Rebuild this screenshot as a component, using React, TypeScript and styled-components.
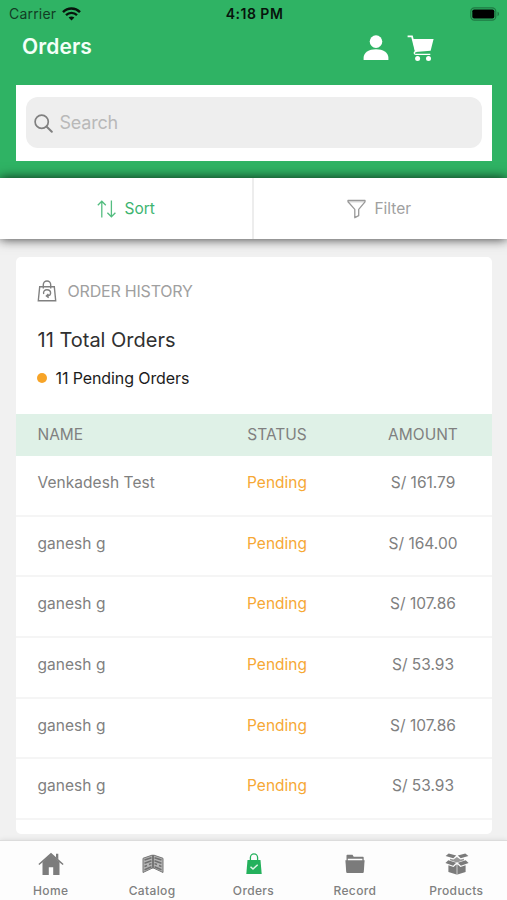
import React from 'react';
import styled, { createGlobalStyle } from 'styled-components';

const GREEN = '#2fb364';
const GREY = '#808080';

const GlobalStyle = createGlobalStyle`
  *, *::before, *::after { box-sizing: border-box; }
  body {
    margin: 0;
    font-family: Inter, 'Liberation Sans', sans-serif;
    background: #f1f1f1;
  }
`;

const Screen = styled.div`
  display: flex;
  flex-direction: column;
  width: 507px;
  height: 900px;
  overflow: hidden;
  background: #f1f1f1;
`;

const Text = styled.span<{ $size: number; $color?: string; $weight?: number; $spacing?: number }>`
  font-size: ${p => p.$size}px;
  color: ${p => p.$color ?? GREY};
  font-weight: ${p => p.$weight ?? 400};
  letter-spacing: ${p => p.$spacing ?? 0}px;
  line-height: 20px;
  white-space: nowrap;
`;

const Header = styled.header`
  height: 178px;
  flex: none;
  background: ${GREEN};
`;

const StatusBar = styled.div`
  display: grid;
  grid-template-columns: 1fr auto 1fr;
  align-items: center;
  height: 27px;
  padding: 0 7px 0 9px;
`;

const Carrier = styled.div`
  display: flex;
  align-items: center;
  gap: 6px;
`;

const Battery = styled.div`
  display: flex;
  justify-content: flex-end;
`;

const TitleBar = styled.div`
  display: flex;
  align-items: center;
  justify-content: space-between;
  height: 40px;
  padding: 0 73px 1px 22px;
`;

const Actions = styled.div`
  display: flex;
  gap: 18px;
  padding-top: 1px;
`;

const SearchPanel = styled.div`
  height: 76px;
  margin: 18px 15px 0 15.5px;
  padding: 12px 10px 13px;
  background: #fff;
`;

const SearchField = styled.div`
  display: flex;
  align-items: center;
  gap: 7px;
  height: 51px;
  padding: 1px 0 0 8px;
  border-radius: 12px;
  background: #eee;
`;

const Toolbar = styled.div`
  position: relative;
  display: flex;
  flex: none;
  height: 61px;
  background: #fff;
  box-shadow: 0 0 11px rgba(0, 0, 0, 0.8);
`;

const ToolButton = styled.div<{ $divided?: boolean }>`
  display: flex;
  flex: 1;
  align-items: center;
  justify-content: center;
  gap: ${p => (p.$divided ? 9 : 8)}px;
  padding-right: ${p => (p.$divided ? 0 : 2)}px;
  border-right: ${p => (p.$divided ? '2px solid #ededed' : '0')};
`;

const Card = styled.main`
  height: 577px;
  flex: none;
  margin: 18px 15px 0 15.5px;
  border-radius: 5px;
  overflow: hidden;
  background: #fff;
`;

const Summary = styled.section`
  display: flex;
  flex-direction: column;
  height: 157px;
  padding: 22px 22px 0 21px;
`;

const SummaryLine = styled.div<{ $gap: number; $top?: number; $indent?: number }>`
  display: flex;
  align-items: center;
  gap: ${p => p.$gap}px;
  height: 24px;
  margin-top: ${p => p.$top ?? 0}px;
  padding-left: ${p => p.$indent ?? 0}px;
`;

const Dot = styled.i`
  width: 10px;
  height: 10px;
  border-radius: 50%;
  background: #f7a428;
`;

const Row = styled.div<{ $head?: boolean }>`
  display: grid;
  grid-template-columns: 169.5px 140px 152px;
  align-items: start;
  height: ${p => (p.$head ? 42 : 60.65)}px;
  padding: ${p => (p.$head ? 11 : 17)}px 0 0 22px;
  background: ${p => (p.$head ? '#dff1e7' : '#fff')};
  border-bottom: ${p => (p.$head ? '0' : '2px solid #f5f5f5')};
`;

const Cell = styled.div<{ $center?: boolean }>`
  display: flex;
  justify-content: ${p => (p.$center ? 'center' : 'flex-start')};
`;

const TabBar = styled.nav`
  display: grid;
  grid-template-columns: repeat(5, 1fr);
  height: 60px;
  margin-top: auto;
  flex: none;
  background: #fdfdfd;
  border-top: 1px solid #dcdcdc;
  box-shadow: 0 0 5px rgba(0, 0, 0, 0.1);
`;

const Tab = styled.div`
  display: flex;
  flex-direction: column;
  align-items: center;
  padding-top: 10px;
  gap: 4px;
`;

const WifiIcon = () => (
  <svg width="19" height="14" viewBox="0 0 19 14" fill="none" stroke="#07140c">
    <path d="M1 5.1C5.8.4 13.2.4 18 5.1" strokeWidth="2.5" />
    <path d="M4 8.1c3.1-3 7.9-3 11 0" strokeWidth="2.3" />
    <path d="M9.5 13.5 6.6 10.6c1.7-1.5 4.1-1.5 5.8 0z" fill="#07140c" stroke="none" />
  </svg>
);

const BatteryIcon = () => (
  <svg width="30" height="14" viewBox="0 0 30 14">
    <rect x=".8" y=".8" width="25" height="12.4" rx="3.6" fill="none" stroke="#1f7a43" strokeWidth="1.2" />
    <rect x="2.3" y="2.5" width="22" height="9" rx="1.8" fill="#000" />
    <path d="M27.5 4.8c2 .6 2 3.8 0 4.4z" fill="#1f7a43" />
  </svg>
);

const PersonIcon = () => (
  <svg width="26" height="27" viewBox="0 0 26 27" fill="#fff">
    <circle cx="13" cy="7.6" r="6.3" />
    <path d="M.6 26v-2.200C.6 18.600 6 15.200 13 15.200s12.400 3.400 12.400 8.600V26z" />
  </svg>
);

const CartIcon = () => (
  <svg width="27" height="27" viewBox="0 0 27 27">
    <path d="M.6 2.300H5l4 15.900" fill="none" stroke="#fff" strokeWidth="1.800" />
    <path d="M5.500 4.900H26.600L23.600 16.800 8.300 18z" fill="#fff" />
    <path d="M8.600 17.200c-2.200 1.200-1.600 3.200.4 3.200h14.300" fill="none" stroke="#fff" strokeWidth="1.300" />
    <circle cx="10.600" cy="24.400" r="2.500" fill="#fff" />
    <circle cx="21.500" cy="24.400" r="2.500" fill="#fff" />
  </svg>
);

const SearchIcon = () => (
  <svg width="19" height="19" viewBox="0 0 19 19" fill="none" stroke="#808080" strokeWidth="1.700">
    <circle cx="7.700" cy="7.700" r="6.600" />
    <path d="m12.500 12.500 5.300 5.300" strokeLinecap="round" strokeWidth="2" />
  </svg>
);

const SortIcon = () => (
  <svg width="19" height="18" viewBox="0 0 19 18" fill="none" stroke="#54bd80" strokeWidth="1.300">
    <path d="M4.800 17.500V1.200M.8 5.200l4-4 4 4M14.400.5v16.300M10.400 12.800l4 4 4-4" />
  </svg>
);

const FilterIcon = () => (
  <svg width="19" height="20" viewBox="0 0 19 20" fill="none" stroke="#999" strokeWidth="1.300" strokeLinejoin="round">
    <path d="M1 1.300h17v1.500l-6.300 7.600v6.300l-3.900 2V10.400L1 2.800z" />
    <path d="M1 2.800h17" strokeWidth=".6" />
  </svg>
);

const HistoryIcon = () => (
  <svg width="20" height="22" viewBox="0 0 20 22" fill="none" stroke="#808080" strokeWidth="1.400">
    <path d="M2.700 6.800h14.600l1.400 14H1.300z" />
    <path d="M6.300 8.400V4.700a3.700 3.700 0 0 1 7.400 0v3.700" />
    <path d="M6.700 14c-.7-2.600 1-4.300 3.200-4.300 2.300 0 3.700 1.500 3.700 3.400 0 1.600-1.100 2.600-2.700 2.800M11.400 13.900l-2 2 2.300 1.700" />
  </svg>
);

const HomeIcon = () => (
  <svg width="26" height="24" viewBox="0 0 26 24" fill="#7c7c7c">
    <path d="M18 1.700h2.300v6L18 5.500z" />
    <path d="M13 .8 25.600 12l-.9 1.100L13 3.600 1.300 13.100.4 12z" />
    <path d="M13 2.800 21.500 10v13h-6.300v-7.800h-4.400V23H4.500V10z" />
  </svg>
);

const CatalogIcon = () => (
  <svg width="22" height="20" viewBox="0 0 22 20">
    <path d="M1 4.300 10.500 1v13L1 18.500zM21 4.300 11.500 1v13l9.500 4.500z" fill="#b5b5b5" stroke="#777" strokeWidth="1" />
    <path d="m2.500 6 7-2.300M2.500 9.200l7-2.500M2.500 12.500 5 11.500M7 10.500l2.500-.9M2.500 15.800l7-3M19.500 6l-7-2.300M19.500 9.200l-7-2.500M19.500 12.500 17 11.500M15 10.500l-2.500-.9M19.500 15.800l-7-3" stroke="#707070" strokeWidth="1.500" />
    <path d="M11 1v14" stroke="#777" />
  </svg>
);

const BagIcon = () => (
  <svg width="16" height="22" viewBox="0 0 16 22" fill="none">
    <path d="M1.500 7h13l1.200 14H.3z" fill="#24b15c" />
    <path d="M4.400 9V4.500a3.600 3.600 0 0 1 7.200 0V9" stroke="#24b15c" strokeWidth="1.300" />
    <path d="m4.500 13.700 2.500 2.300 4.700-4.200" stroke="#dff5e7" strokeWidth="1.500" />
  </svg>
);

const FolderIcon = () => (
  <svg width="20" height="20" viewBox="0 0 20 20" fill="#7b7b7b">
    <path d="M1.500 7V1.700C1.500 1 1.900.7 2.500.7h5l1.200 2h9c.6 0 1 .4 1 1V7h-1.300V4.800H2.800V7z" />
    <path d="M.4 6.200h19.200l-.8 11.500c-.1.900-.5 1.300-1.400 1.300H2.600c-.9 0-1.300-.4-1.400-1.300z" />
  </svg>
);

const BoxIcon = () => (
  <svg width="24" height="22" viewBox="0 0 24 22" fill="#7b7b7b">
    <path d="M3.700.4 11.200 2.500 8.300 5.200.6 3.100zM20.300.4 12.800 2.500 15.700 5.200l7.700-2.100z" />
    <path d="M5 5.700 8.500 6.500 11.900 4l3.500 2.500 3.600-.8v1.600l-7.100 2.200L5 7.300z" fill="#999" />
    <path d="M3.300 7.300 11.200 9.700 8.100 12.700.4 10zM20.700 7.300 12.800 9.700l3.100 3 7.700-2.700z" />
    <path d="M3.400 12.300 8.600 14l2.900-2.700v10.300l-8.100-2.700zM20.600 12.300 15.400 14l-2.900-2.700v10.300l8.100-2.700z" />
    <path d="M11.400 12h1.200v9.500h-1.200z" fill="#959595" />
  </svg>
);

const orders = [
  { name: 'Venkadesh Test', amount: '161.79' },
  { name: 'ganesh g', amount: '164.00' },
  { name: 'ganesh g', amount: '107.86' },
  { name: 'ganesh g', amount: '53.93' },
  { name: 'ganesh g', amount: '107.86' },
  { name: 'ganesh g', amount: '53.93' },
];

const tabs = [
  { label: 'Home', Icon: HomeIcon },
  { label: 'Catalog', Icon: CatalogIcon },
  { label: 'Orders', Icon: BagIcon },
  { label: 'Record', Icon: FolderIcon },
  { label: 'Products', Icon: BoxIcon },
];

const TabIcon = styled.div`
  display: flex;
  align-items: center;
  justify-content: center;
  height: 26px;
  padding-left: 1px;
`;

export default function App() {
  return (
    <Screen>
      <GlobalStyle />
      <Header>
        <StatusBar>
          <Carrier>
            <Text $size={14} $spacing={0.2} $color="#123d24">Carrier</Text>
            <WifiIcon />
          </Carrier>
          <Text $size={14} $weight={600} $spacing={0.5} $color="#07140c">4:18 PM</Text>
          <Battery><BatteryIcon /></Battery>
        </StatusBar>
        <TitleBar>
          <Text $size={21} $weight={600} $spacing={0.1} $color="#f4fff8">Orders</Text>
          <Actions>
            <PersonIcon />
            <CartIcon />
          </Actions>
        </TitleBar>
        <SearchPanel>
          <SearchField>
            <SearchIcon />
            <Text $size={18} $spacing={-0.2} $color="#b9b9b9">Search</Text>
          </SearchField>
        </SearchPanel>
      </Header>
      <Toolbar>
        <ToolButton $divided>
          <SortIcon />
          <Text $size={15.5} $color="#3db470">Sort</Text>
        </ToolButton>
        <ToolButton>
          <FilterIcon />
          <Text $size={15.5} $color="#a0a0a0">Filter</Text>
        </ToolButton>
      </Toolbar>
      <Card>
        <Summary>
          <SummaryLine $gap={11}>
            <HistoryIcon />
            <Text $size={16} $spacing={-0.2} $color="#a0a0a0">ORDER HISTORY</Text>
          </SummaryLine>
          <SummaryLine $gap={0} $top={25} $indent={1}>
            <Text $size={20} $color="#303030">11 Total Orders</Text>
          </SummaryLine>
          <SummaryLine $gap={9} $top={14}>
            <Dot />
            <Text $size={16} $spacing={-0.1} $color="#1c1c1c">11 Pending Orders</Text>
          </SummaryLine>
        </Summary>
        <Row $head>
          <Cell><Text $size={15.5}>NAME</Text></Cell>
          <Cell $center><Text $size={15.5}>STATUS</Text></Cell>
          <Cell $center><Text $size={15.5}>AMOUNT</Text></Cell>
        </Row>
        {orders.map((order, i) => (
          <Row key={i}>
            <Cell><Text $size={15.5} $spacing={0.05}>{order.name}</Text></Cell>
            <Cell $center><Text $size={15.5} $color="#f6a835">Pending</Text></Cell>
            <Cell $center><Text $size={15.5}>S/ {order.amount}</Text></Cell>
          </Row>
        ))}
      </Card>
      <TabBar>
        {tabs.map(({ label, Icon }) => (
          <Tab key={label}>
            <TabIcon><Icon /></TabIcon>
            <Text $size={12} $weight={500} $spacing={0.35}>{label}</Text>
          </Tab>
        ))}
      </TabBar>
    </Screen>
  );
}
